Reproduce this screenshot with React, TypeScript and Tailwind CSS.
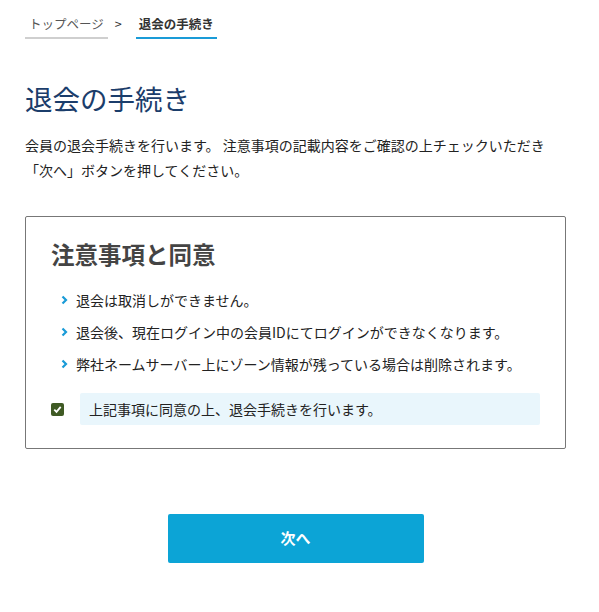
import React from "react";

const font = { fontFamily: '"Noto Sans CJK JP", "Noto Sans", sans-serif' };

function Chevron() {
  return (
    <svg width="7" height="10" viewBox="0 0 7 10" className="shrink-0">
      <path d="M1.5 1.5 L5 5 L1.5 8.5" fill="none" stroke="#1a9bd7" strokeWidth="2.2" />
    </svg>
  );
}

export default function App() {
  const items = [
    "退会は取消しができません。",
    "退会後、現在ログイン中の会員IDにてログインができなくなります。",
    "弊社ネームサーバー上にゾーン情報が残っている場合は削除されます。",
  ];
  return (
    <div className="w-[599px] min-h-[612px] bg-white pl-[25px] pr-[33px] text-[#222]" style={font}>
      <nav className="flex items-end h-[39px] text-[12.5px]">
        <span className="h-[29px] leading-[27px] px-[4px] border-b-2 border-[#cfcfcf] text-[#555]">トップページ</span>
        <span className="h-[29px] leading-[27px] ml-[7px] mr-[14px] text-[#333]">&gt;</span>
        <span className="h-[29px] leading-[27px] px-[3px] border-b-2 border-[#1a9bd7] text-[#333] font-semibold">退会の手続き</span>
      </nav>
      <h1 className="mt-[39px] text-[27.5px] leading-[40px] text-[#1b3d6b] font-normal">退会の手続き</h1>
      <p className="mt-[15px] text-[14px] leading-[25px] text-[#222]">
        会員の退会手続きを行います。 注意事項の記載内容をご確認の上チェックいただき
        <br />
        「次へ」ボタンを押してください。
      </p>
      <section className="mt-[33px] border border-[#777] rounded-[2px] pt-[21px] pb-[23px] px-[25px]">
        <h2 className="text-[23.5px] leading-[32px] font-bold text-[#444]">注意事項と同意</h2>
        <ul className="mt-[14px] pl-[10px]">
          {items.map((t) => (
            <li key={t} className="flex items-center gap-[8px] h-[32px] text-[14px] text-[#222]">
              <Chevron />
              <span>{t}</span>
            </li>
          ))}
        </ul>
        <div className="mt-[13px] flex items-center">
          <span className="w-[13px] h-[13px] rounded-[2px] bg-[#3f5a24] flex items-center justify-center">
            <svg width="9" height="9" viewBox="0 0 9 9">
              <path d="M1.3 4.6 L3.5 6.8 L7.7 1.8" fill="none" stroke="#fff" strokeWidth="1.8" />
            </svg>
          </span>
          <div className="ml-[16px] flex-1 h-[32px] bg-[#e9f6fc] rounded-[2px] pl-[9px] flex items-center text-[14px] text-[#222]">
            上記事項に同意の上、退会手続きを行います。
          </div>
        </div>
      </section>
      <div className="mt-[65px] flex justify-center">
        <button className="w-[256px] h-[49px] rounded-[2px] bg-[#0ca4d6] text-white text-[15px] font-bold">次へ</button>
      </div>
    </div>
  );
}
